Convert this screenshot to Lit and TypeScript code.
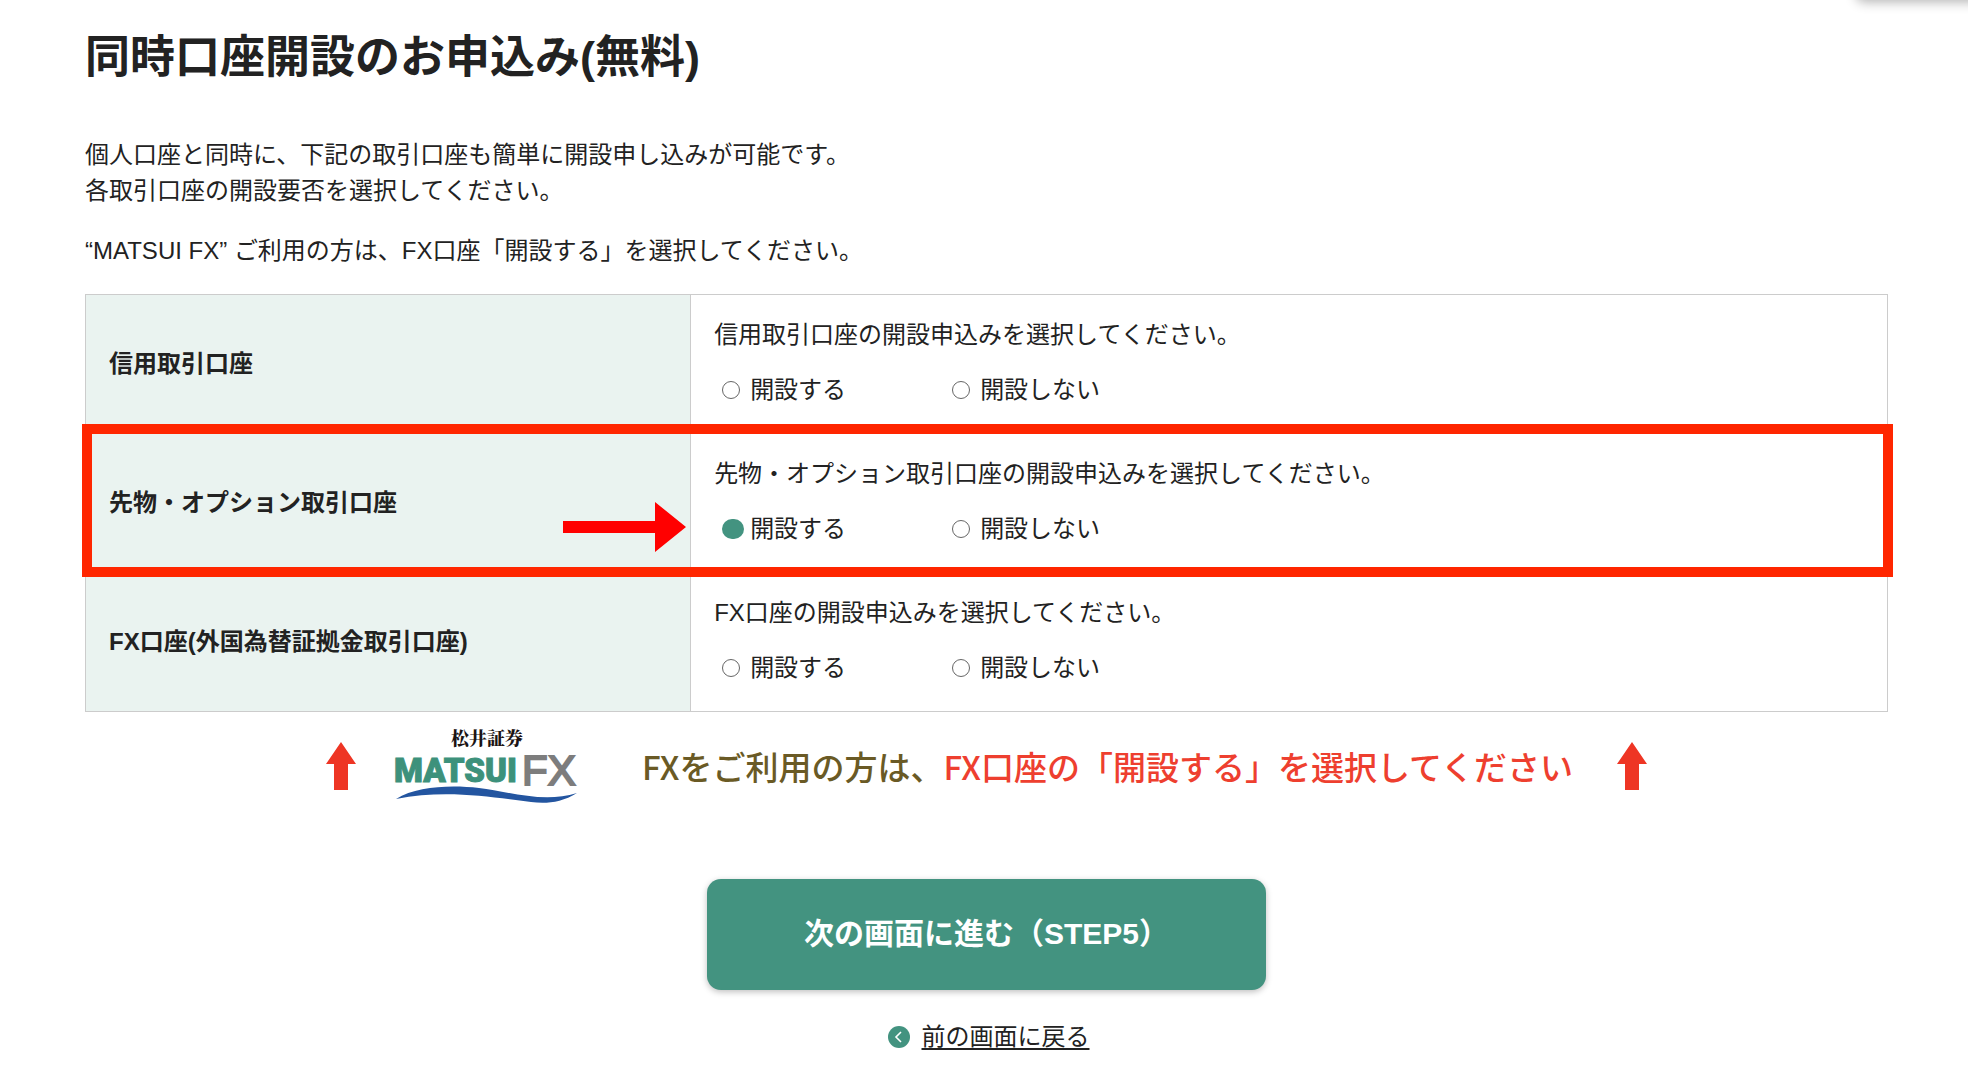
import { LitElement, html, css, svg } from "lit";
import { customElement, state } from "lit/decorators.js";

interface Account {
  id: string;
  name: string;
  prompt: string;
  highlighted?: boolean;
}

const ACCOUNTS: Account[] = [
  { id: "margin", name: "信用取引口座", prompt: "信用取引口座の開設申込みを選択してください。" },
  {
    id: "futures",
    name: "先物・オプション取引口座",
    prompt: "先物・オプション取引口座の開設申込みを選択してください。",
    highlighted: true,
  },
  { id: "fx", name: "FX口座(外国為替証拠金取引口座)", prompt: "FX口座の開設申込みを選択してください。" },
];

const CHOICES = [
  { value: "open", label: "開設する" },
  { value: "skip", label: "開設しない" },
];

@customElement("fx-banner")
export class FxBanner extends LitElement {
  static styles = css`
    :host {
      display: flex;
      align-items: center;
      justify-content: center;
    }
    svg {
      display: block;
      flex: none;
      overflow: visible;
    }
    .logo {
      margin: 0 63px 0 39px;
    }
    .brand {
      font-family: "Noto Serif CJK JP", "Noto Sans CJK JP", serif;
      font-weight: 900;
      font-size: 18px;
      fill: #1c1414;
    }
    .name {
      font-family: Roboto, sans-serif;
      font-weight: 900;
      font-size: 33px;
      fill: #3d917b;
      stroke: #3d917b;
      stroke-width: 1px;
    }
    .fx {
      font-family: "Liberation Sans", sans-serif;
      font-size: 42px;
      fill: #7d7d7d;
      stroke: #7d7d7d;
      stroke-width: 2px;
    }
    .message {
      margin: 0 44px 0 0;
      font-family: "Noto Sans CJK JP", sans-serif;
      font-size: 33px;
      line-height: 48px;
      font-weight: 500;
      color: #6a5a25;
    }
    .accent {
      color: #ee3f2f;
    }
  `;

  private arrow() {
    return html`<svg width="30" height="48" viewBox="0 0 30 48" aria-hidden="true">
      ${svg`<path d="M15 0 30 22H22V48H8V22H0Z" fill="#ee3524" />`}
    </svg>`;
  }

  render() {
    return html`
      ${this.arrow()}
      <svg class="logo" width="184" height="74" viewBox="0 0 184 74" role="img" aria-label="松井証券 MATSUI FX">
        <text class="brand" x="56" y="16">松井証券</text>
        <text class="name" x="-1" y="53">MATSUI</text>
        <text class="fx" x="127" y="56">FX</text>
        <path
          d="M1 70C22 57 56 56 84 59C112 62 148 75 182 64C166 74 150 75 136 73C96 68 50 60 1 70Z"
          fill="#2355a0"
        />
      </svg>
      <p class="message">FXをご利用の方は、<span class="accent">FX口座の「開設する」を選択してください</span></p>
      ${this.arrow()}
    `;
  }
}

@customElement("app-root")
export class AppRoot extends LitElement {
  @state() private selected: Record<string, string> = { futures: "open" };

  static styles = css`
    :host {
      display: block;
      position: relative;
      overflow: hidden;
      background: #fff;
      color: #222;
      font-family: "Liberation Sans", "Noto Sans CJK JP", sans-serif;
      font-size: 24px;
      line-height: 36px;
    }
    .panel-edge {
      position: absolute;
      top: -40px;
      right: -20px;
      width: 132px;
      height: 40px;
      border-radius: 8px;
      box-shadow: 0 2px 12px rgba(0, 0, 0, 0.3);
    }
    .page {
      padding: 31px 80px 22px 85px;
    }
    h1 {
      margin: 0 0 52px;
      font-size: 45px;
      line-height: 54px;
      font-weight: 700;
    }
    .lead {
      margin: 0 0 24px;
    }
    .accounts {
      width: 100%;
      margin-top: 25px;
      border-collapse: separate;
      border-spacing: 0;
      table-layout: fixed;
      border: solid #ccc;
      border-width: 1px 1px 0 1px;
    }
    .row {
      position: relative;
    }
    th,
    td {
      box-sizing: border-box;
      border-bottom: 1px solid #ccc;
      padding: 22px 23px 25px;
      text-align: left;
    }
    th {
      position: relative;
      width: 33.6%;
      border-right: 1px solid #ccc;
      background: #eaf3f0;
      padding: 0 23px;
      font-weight: 700;
    }
    .prompt {
      margin: 0 0 19px;
    }
    .choices {
      display: flex;
    }
    .choice {
      display: flex;
      align-items: center;
      width: 230px;
      padding-left: 8px;
      box-sizing: border-box;
    }
    .radio {
      appearance: none;
      flex: none;
      box-sizing: border-box;
      width: 18px;
      height: 18px;
      margin: 0 10px 0 0;
      border: 1px solid #666;
      border-radius: 50%;
      background: #fff;
    }
    .radio:checked {
      width: 22px;
      height: 20px;
      margin-right: 6px;
      border: 0;
      border-radius: 10px;
      background: #439380;
    }
    .frame {
      position: absolute;
      inset: -10px -6px -4px -4px;
      border: 10px solid #ff2600;
      pointer-events: none;
      z-index: 1;
    }
    .pointer {
      position: absolute;
      right: 4px;
      top: 68px;
      display: block;
    }
    fx-banner {
      margin-top: 17px;
    }
    .actions {
      display: flex;
      flex-direction: column;
      align-items: center;
      margin-top: 76px;
    }
    .next {
      width: 31%;
      padding: 33px 24px 34px;
      border: 0;
      border-radius: 14px;
      background: #439380;
      box-shadow: 0 2px 6px rgba(0, 0, 0, 0.25);
      color: #fff;
      font: inherit;
      font-size: 30px;
      line-height: 44px;
      font-weight: 700;
      cursor: pointer;
    }
    .back {
      display: flex;
      align-items: center;
      gap: 12px;
      margin-top: 29px;
      padding-left: 4px;
      color: #222;
      text-decoration: none;
    }
    .back svg {
      display: block;
    }
    .back-label {
      text-decoration: underline;
      text-decoration-thickness: 2px;
      text-underline-offset: 3px;
    }
  `;

  private choose(id: string, value: string) {
    this.selected = { ...this.selected, [id]: value };
  }

  private renderAccount(account: Account) {
    return html`
      <tr class="row">
        <th scope="row">
          ${account.name}
          ${account.highlighted
            ? html`<svg class="pointer" width="123" height="50" viewBox="0 0 123 50" aria-hidden="true">
                <path d="M0 19H92V0L123 25L92 50V31H0Z" fill="#f00" />
              </svg>`
            : ""}
        </th>
        <td>
          <p class="prompt" id="prompt-${account.id}">${account.prompt}</p>
          <div class="choices" role="radiogroup" aria-labelledby="prompt-${account.id}">
            ${CHOICES.map(
              (choice) => html`<label class="choice">
                <input
                  class="radio"
                  type="radio"
                  name=${account.id}
                  value=${choice.value}
                  .checked=${this.selected[account.id] === choice.value}
                  @change=${() => this.choose(account.id, choice.value)}
                />${choice.label}</label
              >`
            )}
          </div>
          ${account.highlighted ? html`<div class="frame"></div>` : ""}
        </td>
      </tr>
    `;
  }

  render() {
    return html`
      <div class="panel-edge"></div>
      <main class="page">
        <h1>同時口座開設のお申込み(無料)</h1>
        <p class="lead">
          個人口座と同時に、下記の取引口座も簡単に開設申し込みが可能です。<br />各取引口座の開設要否を選択してください。
        </p>
        <p class="lead">“MATSUI FX” ご利用の方は、FX口座「開設する」を選択してください。</p>
        <table class="accounts">
          <tbody>
            ${ACCOUNTS.map((account) => this.renderAccount(account))}
          </tbody>
        </table>
        <fx-banner></fx-banner>
        <div class="actions">
          <button class="next" type="button">次の画面に進む（STEP5）</button>
          <a class="back" href="#back">
            <svg width="22" height="22" viewBox="0 0 22 22" aria-hidden="true">
              <circle cx="11" cy="11" r="11" fill="#439380" />
              <path d="M13 6 8 11l5 5" fill="none" stroke="#fff" stroke-width="1.6" />
            </svg>
            <span class="back-label">前の画面に戻る</span>
          </a>
        </div>
      </main>
    `;
  }
}
